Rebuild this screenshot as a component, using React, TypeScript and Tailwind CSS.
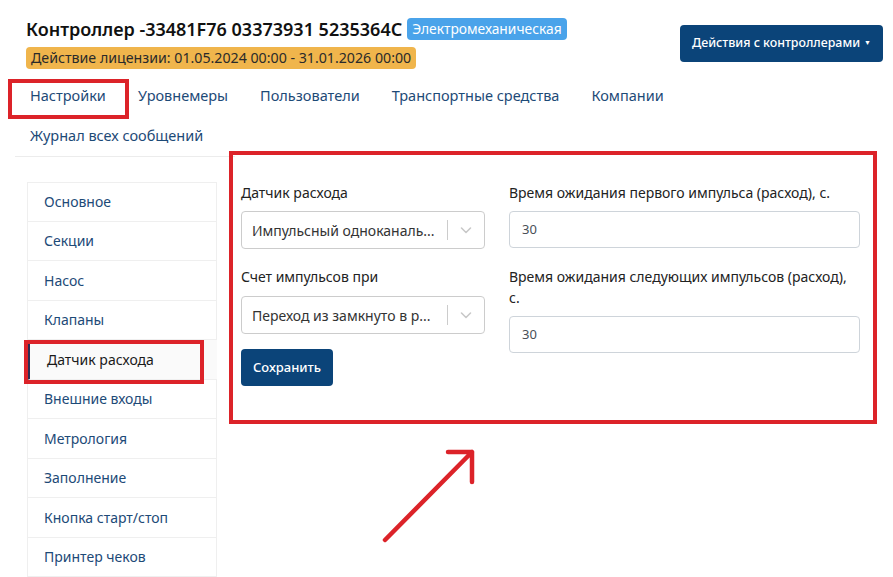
const sideItems = [
  "Основное",
  "Секции",
  "Насос",
  "Клапаны",
  "Датчик расхода",
  "Внешние входы",
  "Метрология",
  "Заполнение",
  "Кнопка старт/стоп",
  "Принтер чеков",
];

const tabs = ["Настройки", "Уровнемеры", "Пользователи", "Транспортные средства", "Компании", "Журнал всех сообщений"];

const Chevron = () => (
  <svg width="14" height="14" viewBox="0 0 14 14">
    <path d="M2.5 5 L7 9.5 L11.5 5" stroke="#c8c8c8" strokeWidth="1.6" fill="none" strokeLinecap="round" strokeLinejoin="round" />
  </svg>
);

const Select = ({ value }: { value: string }) => (
  <div className="flex items-center h-[38px] w-[244px] border border-[#cccccc] rounded-[4px] bg-white">
    <span className="flex-1 pl-[10px] text-[14px] text-[#333333] whitespace-nowrap overflow-hidden">{value}</span>
    <span className="w-px h-[20px] bg-[#cccccc]" />
    <span className="w-[36px] flex justify-center">
      <Chevron />
    </span>
  </div>
);

const Input = ({ value }: { value: string }) => (
  <div className="flex items-center h-[37px] w-[351px] border border-[#ced4da] rounded-[4px] pl-[12px] text-[13px] text-[#495057]">
    {value}
  </div>
);

export default function App() {
  return (
    <div className="relative w-[893px] h-[577px] overflow-hidden bg-white font-['Noto_Sans',sans-serif]">
      {/* header */}
      <div className="flex justify-between pl-[26px] pr-[10px] pt-[17px]">
        <div className="flex flex-col gap-[6px]">
          <div className="flex items-center gap-[5px]">
            <h1 className="text-[18px] font-semibold text-[#111111] leading-[24px]">
              Контроллер -33481F76 03373931 5235364C
            </h1>
            <span className="bg-[#4aa3ea] text-white text-[13.8px] leading-[22px] px-[5px] rounded-[4px]">
              Электромеханическая
            </span>
          </div>
          <span className="self-start bg-[#f0b54c] text-[#2a2a2a] text-[14.2px] leading-[22px] px-[5px] rounded-[4px]">
            Действие лицензии: 01.05.2024 00:00 - 31.01.2026 00:00
          </span>
        </div>
        <button className="mt-[8px] h-[37px] px-[12px] bg-[#0b4479] text-white text-[12.4px] font-medium rounded-[4px] flex items-center gap-[4px]">
          Действия с контроллерами
          <span className="text-[7px]">▼</span>
        </button>
      </div>

      {/* tabs */}
      <div className="mt-[7px] ml-[14px] w-[700px] flex flex-wrap">
        {tabs.map((t) => (
          <div key={t} className="px-[16px] h-[40px] flex items-center text-[14.5px] text-[#1d4a77]">
            {t}
          </div>
        ))}
      </div>
      <div className="ml-[15px] w-[220px] h-px bg-[#ececec]" />

      {/* body */}
      <div className="flex pl-[27px] pt-[25px]">
        <div className="w-[190px] flex flex-col">
          {sideItems.map((s) =>
            s === "Датчик расхода" ? (
              <div key={s} className="h-[39.5px] flex items-center pl-[17px] text-[14px] text-[#1a1a1a] bg-[#fafafa] border-l-[3px] border-[#2d2e55] border-b border-b-[#efefef]">
                {s}
              </div>
            ) : (
              <div key={s} className="h-[39.5px] flex items-center pl-[16px] text-[14px] text-[#1d4a77] border border-t-0 first:border-t border-[#efefef]">
                {s}
              </div>
            )
          )}
        </div>

        <div className="ml-[24px] flex gap-[24px] pt-[1px]">
          <div className="flex flex-col w-[244px]">
            <div className="text-[14px] text-[#222222] h-[20px] leading-[20px]">Датчик расхода</div>
            <div className="mt-[8px]">
              <Select value="Импульсный одноканаль..." />
            </div>
            <div className="mt-[18px] text-[14px] text-[#222222] h-[20px] leading-[20px]">Счет импульсов при</div>
            <div className="mt-[9px]">
              <Select value="Переход из замкнуто в р..." />
            </div>
            <button className="mt-[15px] self-start h-[37px] px-[12px] bg-[#0b4479] text-white text-[13px] font-medium rounded-[4px]">
              Сохранить
            </button>
          </div>
          <div className="flex flex-col w-[351px]">
            <div className="text-[14px] text-[#222222] h-[20px] leading-[20px]">Время ожидания первого импульса (расход), с.</div>
            <div className="mt-[8px]">
              <Input value="30" />
            </div>
            <div className="mt-[18px] text-[14px] text-[#222222] leading-[21px]">Время ожидания следующих импульсов (расход), с.</div>
            <div className="mt-[8px]">
              <Input value="30" />
            </div>
          </div>
        </div>
      </div>

      {/* annotations */}
      <div className="absolute left-[8px] top-[79px] w-[121px] h-[40px] border-[4px] border-[#dc2329]" />
      <div className="absolute left-[24px] top-[340px] w-[180px] h-[44px] border-[4px] border-[#dc2329]" />
      <div className="absolute left-[229px] top-[151px] w-[648px] h-[273px] border-[4px] border-[#dc2329]" />
      <svg className="absolute left-[370px] top-[440px]" width="120" height="115" viewBox="0 0 120 115">
        <path d="M15 100 L102 12 M78 12 L102 12 L102 42" stroke="#dc2329" strokeWidth="4.5" fill="none" strokeLinecap="round" strokeLinejoin="round" />
      </svg>
    </div>
  );
}
